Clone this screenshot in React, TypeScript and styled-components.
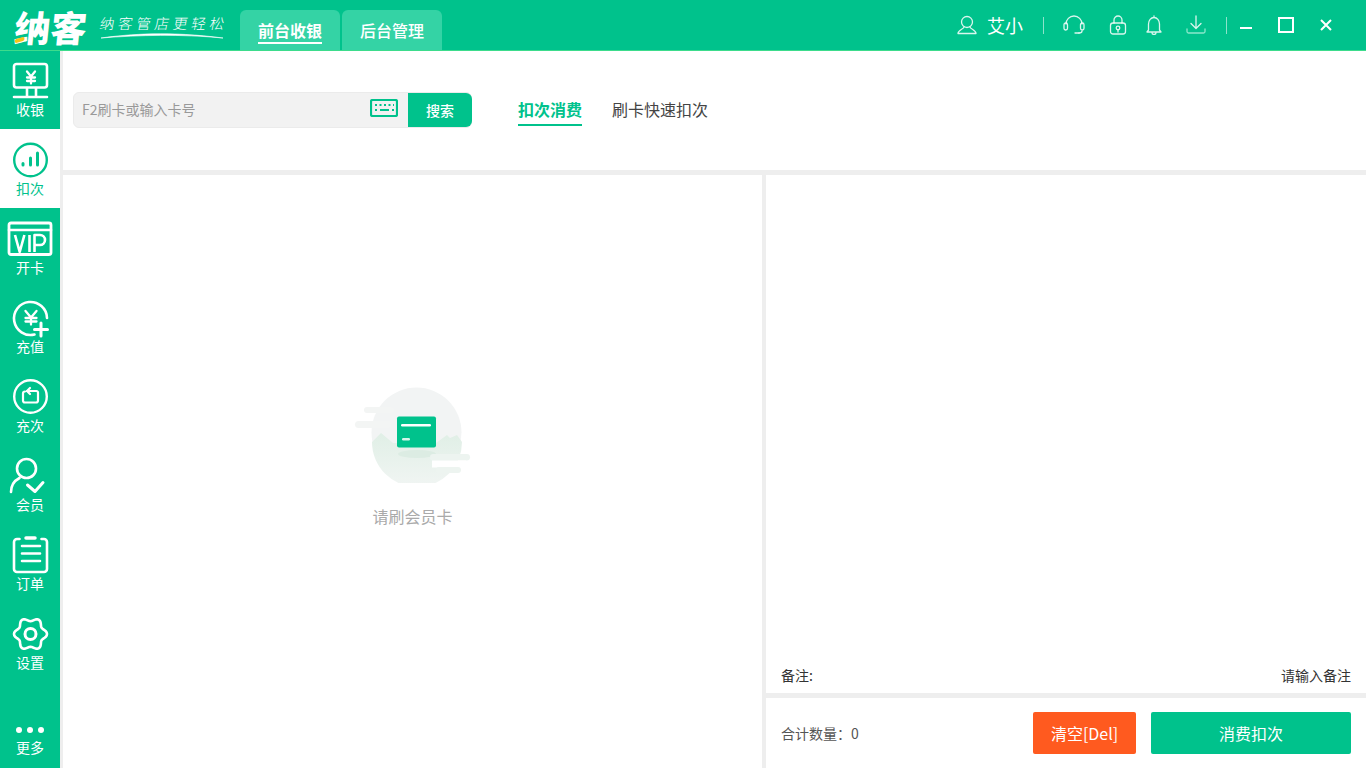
import React from "react";
import styled, { createGlobalStyle } from "styled-components";

const GREEN = "#00c28c";
const GUTTER = "#eeeeee";

const Global = createGlobalStyle`
  html, body { margin: 0; padding: 0; height: 100%; overflow: hidden; }
  body { font-family: "Noto Sans CJK SC", "Liberation Sans", sans-serif; background: ${GUTTER}; }
  #root { height: 100%; }
  * { box-sizing: border-box; }
`;

const Page = styled.div`
  width: 1366px;
  height: 768px;
  display: flex;
  flex-direction: column;
`;

const Header = styled.header`
  height: 51px;
  flex: none;
  display: flex;
  align-items: stretch;
  background: ${GREEN};
  border-bottom: 1px solid #3ddc8c;
`;

const Logo = styled.div`
  width: 88px;
  padding-left: 15px;
  display: flex;
  align-items: center;
  height: 50px;
`;

const LogoText = styled.span`
  position: relative;
  color: #fff;
  font-size: 36px;
  font-weight: 900;
  line-height: 40px;
  margin-top: 2px;
  transform: skewX(-6deg);
  transform-origin: left center;
  white-space: nowrap;
`;

const LogoAccent = styled.i`
  position: absolute;
  left: 1px;
  bottom: 4px;
  width: 10px;
  height: 4px;
  border-radius: 2px;
  background: #f5c518;
  transform: rotate(-18deg);
`;

const Slogan = styled.div`
  width: 152px;
  padding-left: 12px;
  display: flex;
  flex-direction: column;
  justify-content: center;
`;

const SloganText = styled.span`
  color: #fff;
  font-size: 14.5px;
  line-height: 18px;
  font-weight: 300;
  letter-spacing: 3.8px;
  white-space: nowrap;
  transform: skewX(-10deg);
  margin-top: 4px;
`;

const Tabs = styled.nav`
  display: flex;
  align-items: flex-end;
  gap: 2px;
  height: 50px;
`;

const TopTab = styled.div`
  width: 100px;
  height: 40px;
  background: #34d3a5;
  border-radius: 6px 6px 0 0;
  display: flex;
  align-items: center;
  justify-content: center;
  color: #fff;
  font-size: 16px;
`;

const TopTabLabel = styled.span<{ $active?: boolean }>`
  font-weight: ${({ $active }) => ($active ? 700 : 500)};
  line-height: 24px;
  padding-top: 1px;
  border-bottom: 2px solid ${({ $active }) => ($active ? "#fff" : "transparent")};
`;

const RightTools = styled.div`
  margin-left: auto;
  display: flex;
  align-items: center;
  height: 50px;
  color: #fff;
`;

const ToolSlot = styled.span<{ $left: number }>`
  display: flex;
  margin-left: ${({ $left }) => $left}px;
`;

const UserName = styled.span`
  font-size: 18px;
  line-height: 24px;
  margin-left: 10px;
`;

const ToolDivider = styled.i<{ $left: number }>`
  width: 1px;
  height: 17px;
  background: rgba(255, 255, 255, 0.55);
  margin-left: ${({ $left }) => $left}px;
`;

const Body = styled.div`
  flex: 1;
  min-height: 0;
  display: flex;
`;

const Sidebar = styled.aside`
  width: 60px;
  flex: none;
  background: ${GREEN};
  display: flex;
  flex-direction: column;
`;

const NavLabel = styled.span`
  font-size: 14px;
  line-height: 18px;
`;

const NavItem = styled.div<{ $active?: boolean }>`
  height: 79px;
  flex: none;
  display: flex;
  flex-direction: column;
  align-items: center;
  padding-top: 10px;
  background: ${({ $active }) => ($active ? "#fff" : "transparent")};
  color: ${({ $active }) => ($active ? GREEN : "#fff")};

  &:first-child {
    height: 78px;
  }

  &:first-child ${NavLabel} {
    margin-top: -1px;
  }
`;

const MoreItem = styled(NavItem)`
  margin-top: auto;
  height: 58px;
  padding-top: 16px;
  gap: 4px;
`;

const NavIcon = styled.svg`
  width: 44px;
  height: 40px;
  flex: none;
  overflow: visible;
  fill: none;
  stroke: currentColor;
  stroke-width: 2.6;
  stroke-linecap: round;
  stroke-linejoin: round;
`;

const Main = styled.main`
  flex: 1;
  min-width: 0;
  margin-left: 3px;
  display: flex;
  flex-direction: column;
  gap: 5px;
`;

const TopBar = styled.section`
  height: 119px;
  flex: none;
  background: #fff;
  display: flex;
  align-items: flex-start;
  padding: 41px 0 0 10px;
`;

const SearchBox = styled.div`
  width: 399px;
  height: 36px;
  display: flex;
  align-items: stretch;
  background: #f2f2f2;
  border: 1px solid #ebebeb;
  border-radius: 6px;
`;

const SearchInput = styled.div`
  flex: 1;
  display: flex;
  align-items: center;
  justify-content: space-between;
  padding: 0 10px 2px 8px;
  color: #999;
  font-size: 14px;
`;

const KeyboardIcon = styled.svg`
  width: 28px;
  height: 18px;
  margin-top: -2px;
  fill: none;
  stroke: ${GREEN};
  stroke-width: 2.2;
`;

const SearchButton = styled.div`
  width: 64px;
  margin-right: -1px;
  background: ${GREEN};
  color: #fff;
  font-size: 14px;
  font-weight: 500;
  display: flex;
  align-items: center;
  justify-content: center;
  border-radius: 0 6px 6px 0;
`;

const ModeTabs = styled.div`
  display: flex;
  gap: 30px;
  margin-left: 46px;
  height: 36px;
`;

const ModeTab = styled.div<{ $active?: boolean }>`
  height: 34px;
  font-size: 16px;
  line-height: 35px;
  font-weight: ${({ $active }) => ($active ? 700 : 400)};
  color: ${({ $active }) => ($active ? GREEN : "#444")};
  border-bottom: 2px solid ${({ $active }) => ($active ? GREEN : "transparent")};
`;

const Panels = styled.div`
  flex: 1;
  min-height: 0;
  display: flex;
  gap: 4px;
`;

const CardPanel = styled.section`
  width: 699px;
  flex: none;
  background: #fff;
  display: flex;
  flex-direction: column;
  align-items: center;
  justify-content: center;
  padding-bottom: 33px;
`;

const EmptyArt = styled.svg`
  width: 125px;
  height: 100px;
`;

const EmptyText = styled.div`
  margin-top: 21px;
  color: #aaa;
  font-size: 16px;
  line-height: 24px;
`;

const OrderPanel = styled.section`
  flex: 1;
  min-width: 0;
  display: flex;
  flex-direction: column;
  gap: 5px;
`;

const OrderList = styled.div`
  flex: 1;
  min-height: 0;
  background: #fff;
  display: flex;
  align-items: flex-end;
  justify-content: space-between;
  padding: 0 15px 8px;
  color: #333;
  font-size: 14px;
  line-height: 20px;
`;

const Footer = styled.div`
  height: 70px;
  flex: none;
  background: #fff;
  display: flex;
  align-items: center;
  padding: 0 15px;
`;

const Total = styled.span`
  color: #555;
  font-size: 14px;
  margin-right: auto;
`;

const ActionButton = styled.div<{ $width: number; $color: string }>`
  width: ${({ $width }) => $width}px;
  height: 42px;
  margin-left: 15px;
  background: ${({ $color }) => $color};
  border-radius: 2px;
  color: #fff;
  font-size: 16px;
  display: flex;
  align-items: center;
  justify-content: center;
`;

const ToolIcon = styled.svg`
  fill: none;
  stroke: rgba(255, 255, 255, 0.85);
  stroke-width: 1.3;
  stroke-linecap: round;
  stroke-linejoin: round;
`;

const WindowIcon = styled.svg`
  fill: none;
  stroke: #fff;
  stroke-width: 2;
`;

// wavy ring with six lobes, the outline of the settings gear
const gearPath = (cx: number, cy: number) => {
  const points: string[] = [];
  for (let deg = 0; deg < 360; deg += 5) {
    const a = (deg * Math.PI) / 180;
    const r = 14.6 + 1.9 * Math.cos(6 * a);
    points.push(`${(cx + r * Math.cos(a)).toFixed(2)} ${(cy + r * Math.sin(a)).toFixed(2)}`);
  }
  return `M${points.join("L")}z`;
};

const navItems: { label: string; active?: boolean; icon: React.ReactNode }[] = [
  {
    label: "收银",
    icon: (
      <>
        <rect x="5.500" y="2" width="33" height="23.500" rx="2.500" />
        <path d="M5.500 35h33M18.500 26v9M27.500 26v9" />
        <path d="M18.500 9.500l4 5 4-5M22.500 14.500v7M18.500 15.500h8M18.500 19h8" strokeWidth="2.300" />
      </>
    ),
  },
  {
    label: "扣次",
    active: true,
    icon: (
      <>
        <circle cx="22" cy="20" r="16.300" strokeWidth="2.400" />
        <path d="M14.500 23.500v1.500M22 18v7M29 13v12" strokeWidth="3" />
      </>
    ),
  },
  {
    label: "开卡",
    icon: (
      <>
        <rect x="0.500" y="4" width="42" height="31.500" rx="2" strokeWidth="2.800" />
        <path d="M0.500 11h42" />
        <path
          d="M6.500 16l4.700 17 4.700-17M21 16v17M26 33V16h5.500a4.500 4.500 0 0 1 0 10H26"
          strokeWidth="2.600"
          strokeLinecap="butt"
        />
      </>
    ),
  },
  {
    label: "充值",
    icon: (
      <>
        <path d="M26 36.500A16.500 16.500 0 1 1 38.500 20" />
        <path d="M17 13l5.500 6.500 5.500-6.500M22.500 19.500v7M17 20h11M17 23.500h11" strokeWidth="2.300" />
        <path d="M32.500 25v13M26 31.500h13" strokeWidth="3" />
      </>
    ),
  },
  {
    label: "充次",
    icon: (
      <>
        <circle cx="22" cy="19.500" r="16.300" strokeWidth="2.400" />
        <path d="M21.500 11l-3 3 3 3" strokeWidth="2.200" />
        <path d="M18.500 14H28a1.500 1.500 0 0 1 1.500 1.500v8a2 2 0 0 1-2 2h-11a2 2 0 0 1-2-2v-7a2 2 0 0 1 2-2" strokeWidth="2.200" />
      </>
    ),
  },
  {
    label: "会员",
    icon: (
      <>
        <circle cx="18" cy="12.500" r="9.500" />
        <path d="M2.500 36a16 16 0 0 1 8.500-14" />
        <path d="M19 29l7.500 6.500 8-9" strokeWidth="3" />
      </>
    ),
  },
  {
    label: "订单",
    icon: (
      <>
        <path d="M11 4H8.500a3 3 0 0 0-3 3v27a3 3 0 0 0 3 3h27a3 3 0 0 0 3-3V7a3 3 0 0 0-3-3H33" />
        <path d="M17.500 3h9" strokeWidth="3.500" />
        <path d="M13.500 11h18M13.500 18.500h18M13.500 26h18" />
      </>
    ),
  },
  {
    label: "设置",
    icon: (
      <>
        <path d={gearPath(22, 20)} />
        <circle cx="22" cy="20" r="5.500" strokeWidth="3" />
      </>
    ),
  },
];

export default function App() {
  return (
    <Page>
      <Global />
      <Header>
        <Logo>
          <LogoText>
            纳客
            <LogoAccent />
          </LogoText>
        </Logo>
        <Slogan>
          <SloganText>纳客管店更轻松</SloganText>
          <svg width="125" height="8" viewBox="0 0 125 8">
            <path d="M1 6C30 2 70-1 123 6C80 2 40 3 1 6z" fill="#fff" stroke="#fff" strokeWidth="0.6" />
          </svg>
        </Slogan>
        <Tabs>
          <TopTab>
            <TopTabLabel $active>前台收银</TopTabLabel>
          </TopTab>
          <TopTab>
            <TopTabLabel>后台管理</TopTabLabel>
          </TopTab>
        </Tabs>
        <RightTools>
          <ToolIcon width="20" height="20" viewBox="0 0 20 20">
            <circle cx="10" cy="7" r="5.500" />
            <path d="M7 12c0 2-6 3-6 6.500h18c0-3.500-6-4.500-6-6.500" />
          </ToolIcon>
          <UserName>艾小</UserName>
          <ToolDivider $left={20} />
          <ToolSlot $left={19}>
            <ToolIcon width="22" height="20" viewBox="0 0 22 20">
              <path d="M3 9a8 8 0 0 1 16 0M16 18c2 0 3-1 3-2" />
              <rect x="1" y="8" width="3.500" height="7" rx="1.700" />
              <rect x="17.500" y="8" width="3.500" height="7" rx="1.700" />
              <path d="M12 18h4" />
            </ToolIcon>
          </ToolSlot>
          <ToolSlot $left={24}>
            <ToolIcon width="18" height="20" viewBox="0 0 18 20">
              <path d="M5 8V5a4 4 0 0 1 8 0v3" />
              <rect x="1.500" y="8" width="15" height="11" rx="2.500" />
              <circle cx="9" cy="13" r="1.800" />
              <path d="M9 15v2" />
            </ToolIcon>
          </ToolSlot>
          <ToolSlot $left={18}>
            <ToolIcon width="18" height="20" viewBox="0 0 18 20">
              <path d="M9 1v1.500M3.500 15V9a5.500 6.500 0 0 1 11 0v6l1.500 2H2zM7 17.500a2 2 0 0 0 4 0" />
            </ToolIcon>
          </ToolSlot>
          <ToolSlot $left={23}>
            <ToolIcon width="20" height="20" viewBox="0 0 20 20">
              <path d="M10 1v12M5 8.500l5 5 5-5" />
              <path d="M1 14v2.500a1.500 1.500 0 0 0 1.500 1.500h15a1.500 1.500 0 0 0 1.500-1.500V14" stroke="#8be8cc" />
            </ToolIcon>
          </ToolSlot>
          <ToolDivider $left={20} />
          <ToolSlot $left={13}>
            <WindowIcon width="12" height="16" viewBox="0 0 12 16">
              <path d="M0 11h12" />
            </WindowIcon>
          </ToolSlot>
          <ToolSlot $left={26}>
            <WindowIcon width="16" height="16" viewBox="0 0 16 16">
              <rect x="1" y="1" width="14" height="14" />
            </WindowIcon>
          </ToolSlot>
          <ToolSlot $left={26}>
            <WindowIcon width="12" height="16" viewBox="0 0 12 16">
              <path d="M1 3l10 10M11 3L1 13" />
            </WindowIcon>
          </ToolSlot>
          <ToolSlot $left={34}>
            <span />
          </ToolSlot>
        </RightTools>
      </Header>
      <Body>
        <Sidebar>
          {navItems.map((item) => (
            <NavItem key={item.label} $active={item.active}>
              <NavIcon viewBox="-0.500 -1 44 40">{item.icon}</NavIcon>
              <NavLabel>{item.label}</NavLabel>
            </NavItem>
          ))}
          <MoreItem>
            <svg width="30" height="8" viewBox="0 0 30 8" style={{ flex: "none" }}>
              <circle cx="4" cy="4" r="3" fill="#fff" />
              <circle cx="15" cy="4" r="3" fill="#fff" />
              <circle cx="26" cy="4" r="3" fill="#fff" />
            </svg>
            <NavLabel>更多</NavLabel>
          </MoreItem>
        </Sidebar>
        <Main>
          <TopBar>
            <SearchBox>
              <SearchInput>
                F2刷卡或输入卡号
                <KeyboardIcon viewBox="0 0 28 18">
                  <rect x="1" y="1" width="26" height="16" rx="1.500" />
                  <path d="M5 6h2M9.500 6h2M14 6h2M18.500 6h2M23 6h1M5 11h2M10 11h9M22 11h2" />
                </KeyboardIcon>
              </SearchInput>
              <SearchButton>搜索</SearchButton>
            </SearchBox>
            <ModeTabs>
              <ModeTab $active>扣次消费</ModeTab>
              <ModeTab>刷卡快速扣次</ModeTab>
            </ModeTabs>
          </TopBar>
          <Panels>
            <CardPanel>
              <EmptyArt viewBox="0 0 125 100">
                <defs>
                  <linearGradient id="hills" x1="0" y1="0" x2="0" y2="1">
                    <stop offset="0" stopColor="#e0efe6" />
                    <stop offset="1" stopColor="#f1f5f3" />
                  </linearGradient>
                </defs>
                <circle cx="66.500" cy="49.500" r="45" fill="#f2f4f4" />
                <path d="M22 59l9-9 12 10h43l11-8 3 3 7-3 5 7A45 45 0 0 1 22 59z" fill="url(#hills)" />
                <ellipse cx="67" cy="71" rx="19" ry="4" fill="#dcece3" />
                <rect x="14" y="24" width="30" height="6" rx="3" fill="#f3f5f4" />
                <rect x="5" y="38" width="36" height="7" rx="3.500" fill="#f3f5f4" />
                <rect x="80" y="71" width="40" height="6.500" rx="3.250" fill="#edf4f0" />
                <rect x="82" y="77.500" width="34" height="7" fill="#fff" />
                <rect x="86" y="84" width="25" height="6" rx="3" fill="#edf4f0" />
                <rect x="47" y="33.500" width="39" height="31" rx="2" fill={GREEN} />
                <rect x="51" y="41" width="30" height="2.500" rx="1.200" fill="#fff" />
                <rect x="52" y="55" width="8" height="2.500" rx="1.200" fill="#d4f5ea" />
              </EmptyArt>
              <EmptyText>请刷会员卡</EmptyText>
            </CardPanel>
            <OrderPanel>
              <OrderList>
                <span>备注:</span>
                <span>请输入备注</span>
              </OrderList>
              <Footer>
                <Total>合计数量：0</Total>
                <ActionButton $width={103} $color="#ff5a1f">
                  清空[Del]
                </ActionButton>
                <ActionButton $width={200} $color={GREEN}>
                  消费扣次
                </ActionButton>
              </Footer>
            </OrderPanel>
          </Panels>
        </Main>
      </Body>
    </Page>
  );
}
